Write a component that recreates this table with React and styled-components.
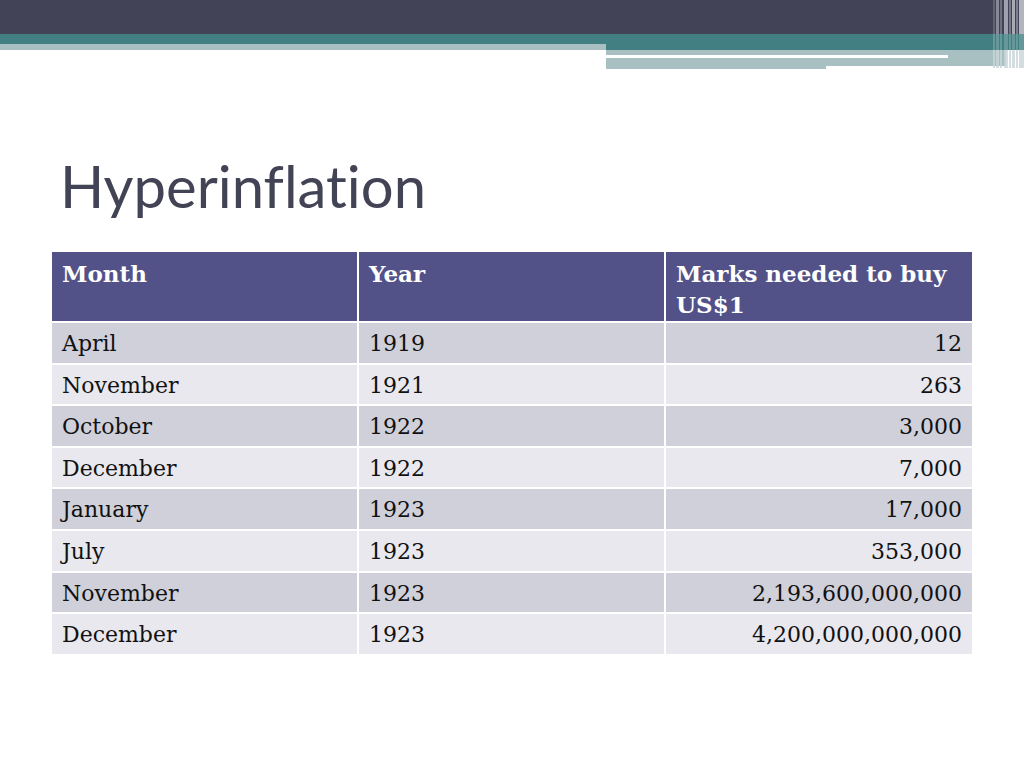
import React from 'react';
import styled, { createGlobalStyle } from 'styled-components';

const GlobalStyle = createGlobalStyle`
  html, body {
    margin: 0;
    padding: 0;
    background: #ffffff;
  }
`;

const Slide = styled.div`
  width: 1024px;
  height: 768px;
  display: flex;
  flex-direction: column;
  background: #ffffff;
  overflow: hidden;
`;

const Banner = styled.svg`
  display: block;
  flex: none;
`;

const Title = styled.h1`
  margin: 0;
  padding: 68px 0 0 60px;
  height: 96px;
  font-family: Lato, "Open Sans", sans-serif;
  font-weight: 400;
  font-size: 58px;
  line-height: 96px;
  font-variant-ligatures: none;
  color: #424456;
`;

const Table = styled.div`
  margin: 18px 0 0 52px;
  width: 920px;
  display: grid;
  grid-template-columns: 305px 305px 306px;
  gap: 2px;
  background: #ffffff;
  font-family: "DejaVu Serif", "Liberation Serif", serif;
`;

const HeadCell = styled.div`
  height: 69px;
  box-sizing: border-box;
  padding: 6px 10px 0 10px;
  background: #525288;
  color: #ffffff;
  font-weight: 700;
  font-size: 23px;
  line-height: 31px;
`;

const Cell = styled.div`
  height: 39.6px;
  box-sizing: border-box;
  padding: 5px 10px 0 10px;
  background: ${(p) => (p.$odd ? '#cfd0da' : '#e8e8ee')};
  color: #111111;
  font-size: 22px;
  line-height: 31px;
  text-align: ${(p) => (p.$right ? 'right' : 'left')};
`;

const rows = [
  ['April', '1919', '12'],
  ['November', '1921', '263'],
  ['October', '1922', '3,000'],
  ['December', '1922', '7,000'],
  ['January', '1923', '17,000'],
  ['July', '1923', '353,000'],
  ['November', '1923', '2,193,600,000,000'],
  ['December', '1923', '4,200,000,000,000'],
];

function TopBanner() {
  const stripes = [
    [993, 2, '#6c6c7e'], [996, 3, '#9a9aa8'], [1000, 2, '#7a7a8c'],
    [1004, 4, '#b8b8c4'], [1009, 2, '#858597'], [1012, 3, '#c4c4cc'],
    [1016, 2, '#8d8d9d'], [1019, 5, '#d2d2d8'],
  ];
  return (
    <Banner width="1024" height="70" viewBox="0 0 1024 70">
      <rect x="0" y="0" width="1024" height="34" fill="#424357" />
      <rect x="0" y="34" width="1024" height="10" fill="#427f82" />
      <rect x="0" y="44" width="606" height="6" fill="#a9c0c3" />
      <rect x="606" y="44" width="418" height="6" fill="#427f82" />
      <rect x="606" y="50" width="400" height="16" fill="#a9c0c3" />
      <rect x="606" y="66" width="220" height="3" fill="#a9c0c3" />
      <rect x="606" y="55" width="342" height="3" fill="#ffffff" />
      {stripes.map(([x, w, c]) => (
        <g key={x}>
          <rect x={x} y="0" width={w} height="34" fill={c} opacity="0.8" />
          <rect x={x} y="34" width={w} height="16" fill="#7fa8aa" opacity="0.6" />
          <rect x={x} y="50" width={w} height="18" fill="#c9d6d8" opacity="0.8" />
        </g>
      ))}
    </Banner>
  );
}

export default function App() {
  return (
    <>
      <GlobalStyle />
      <Slide>
        <TopBanner />
        <Title>Hyperinflation</Title>
        <Table>
          <HeadCell>Month</HeadCell>
          <HeadCell>Year</HeadCell>
          <HeadCell>Marks needed to buy US$1</HeadCell>
          {rows.map((r, i) => (
            <React.Fragment key={i}>
              <Cell $odd={i % 2 === 0}>{r[0]}</Cell>
              <Cell $odd={i % 2 === 0}>{r[1]}</Cell>
              <Cell $odd={i % 2 === 0} $right>{r[2]}</Cell>
            </React.Fragment>
          ))}
        </Table>
      </Slide>
    </>
  );
}
